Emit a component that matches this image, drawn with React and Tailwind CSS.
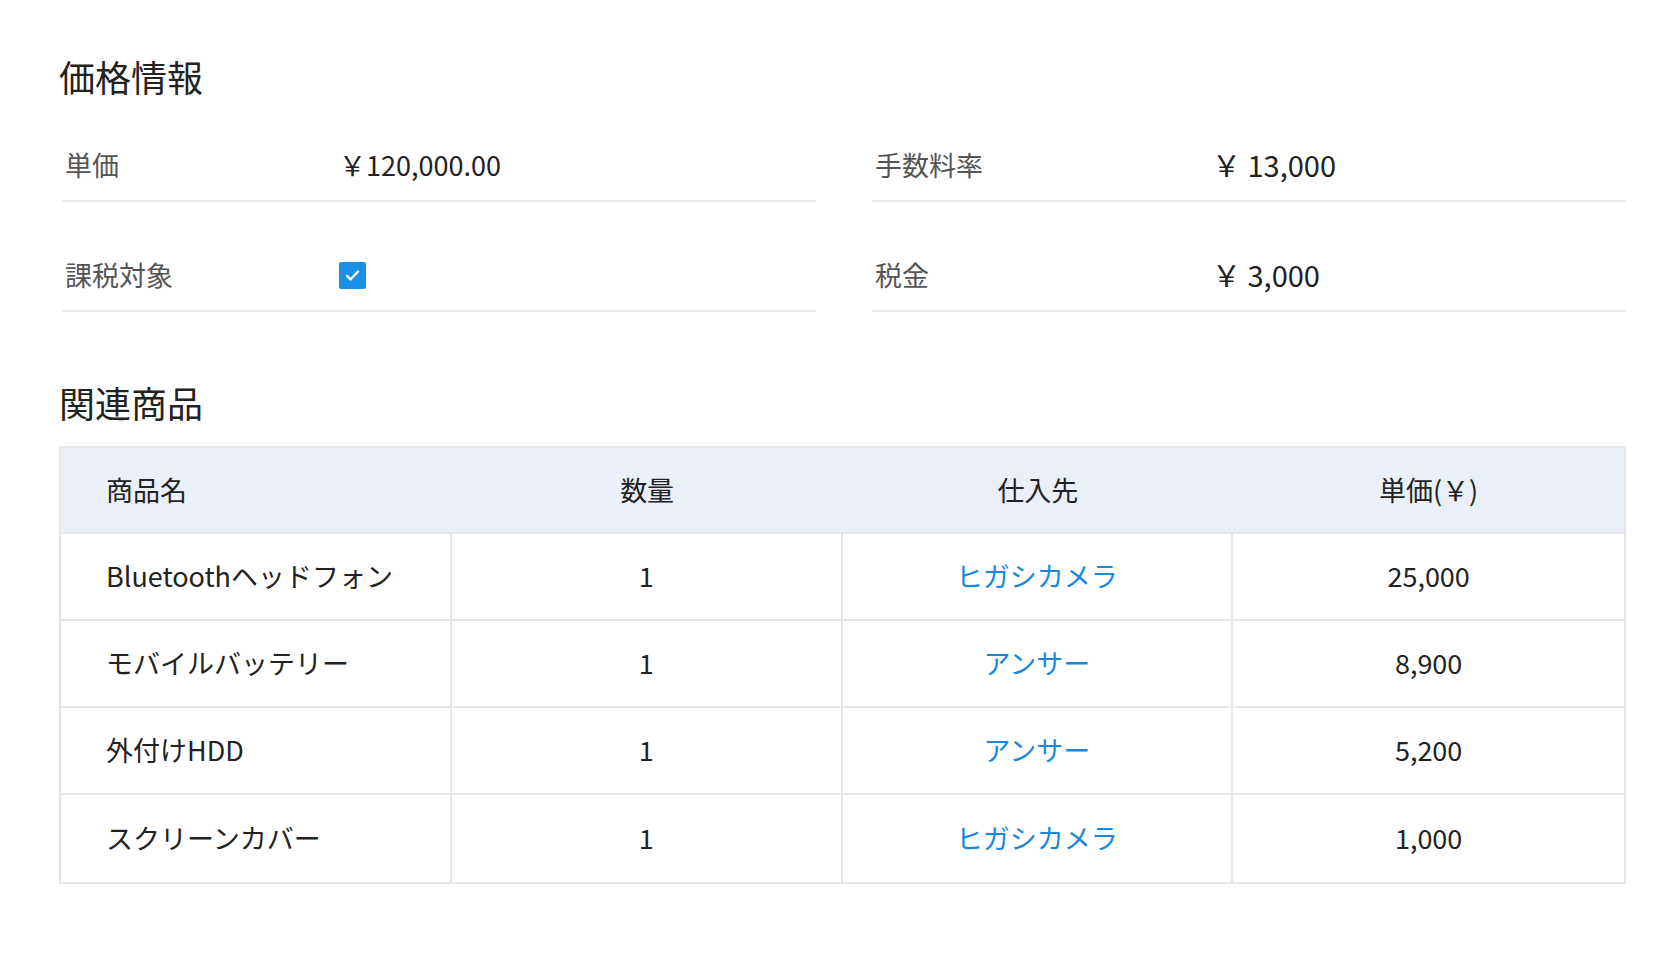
import React from 'react';

const rows = [
    { name: 'Bluetoothヘッドフォン', qty: 1, vendor: 'ヒガシカメラ', price: '25,000' },
    { name: 'モバイルバッテリー', qty: 1, vendor: 'アンサー', price: '8,900' },
    { name: '外付けHDD', qty: 1, vendor: 'アンサー', price: '5,200' },
    { name: 'スクリーンカバー', qty: 1, vendor: 'ヒガシカメラ', price: '1,000' },
];

const Field = ({ label, children, labelW, valueCls }) => (
    <div className='flex items-center h-[110px] pt-[38px] border-b-2 border-[#e8e8e8] px-[3px]'>
        <div className={`${labelW} text-[#555] shrink-0`}>{label}</div>
        <div className={`text-[#222] ${valueCls}`}>{children}</div>
    </div>
);

const App = () => {
    return (
        <div className='w-[1680px] h-[960px] bg-white pl-[59px] pr-[54px] pt-[58px] text-[27px]' style={{ fontFamily: '"Noto Sans CJK JP", "Noto Sans", sans-serif' }}>
            <h1 className='text-[36px] text-[#222] leading-none'>価格情報</h1>
            <div className='grid grid-cols-2 gap-x-[56px] -mt-[2px] ml-[3px]'>
                <Field label='単価' labelW='w-[274px]' valueCls='text-[27px]'>￥120,000.00</Field>
                <Field label='手数料率' labelW='w-[337px]' valueCls='text-[29px]'>￥ 13,000</Field>
                <Field label='課税対象' labelW='w-[274px]'>
                    <span className='flex items-center justify-center w-[27px] h-[27px] bg-[#1a8fe6] rounded-[2px]'>
                        <svg viewBox='0 0 24 24' className='w-[19px] h-[19px]' fill='none' stroke='white' strokeWidth='3' strokeLinecap='round' strokeLinejoin='round'>
                            <path d='M5 12.5l4.5 4.5L19 7' />
                        </svg>
                    </span>
                </Field>
                <Field label='税金' labelW='w-[337px]' valueCls='text-[29px]'>￥ 3,000</Field>
            </div>
            <h2 className='text-[36px] text-[#222] leading-none mt-[72px]'>関連商品</h2>
            <div className='mt-[26px] border-2 border-[#e6e6e6]'>
                <div className='grid grid-cols-4 h-[86px] items-center bg-[#ebeff8] text-[#222] border-b-2 border-[#e6e6e6]'>
                    <div className='pl-[45px]'>商品名</div>
                    <div className='text-center'>数量</div>
                    <div className='text-center'>仕入先</div>
                    <div className='text-center'>単価(￥)</div>
                </div>
                {rows.map((r, i) => (
                    <div key={i} className={`grid grid-cols-4 h-[87px] text-[#222] ${i < rows.length - 1 ? 'border-b-2 border-[#e6e6e6]' : ''}`}>
                        <div className='flex items-center pl-[45px] border-r-2 border-[#e6e6e6]'>{r.name}</div>
                        <div className='flex items-center justify-center border-r-2 border-[#e6e6e6]'>{r.qty}</div>
                        <div className='flex items-center justify-center border-r-2 border-[#e6e6e6] text-[#1a88d8]'>{r.vendor}</div>
                        <div className='flex items-center justify-center'>{r.price}</div>
                    </div>
                ))}
            </div>
        </div>
    );
};

export default App;
